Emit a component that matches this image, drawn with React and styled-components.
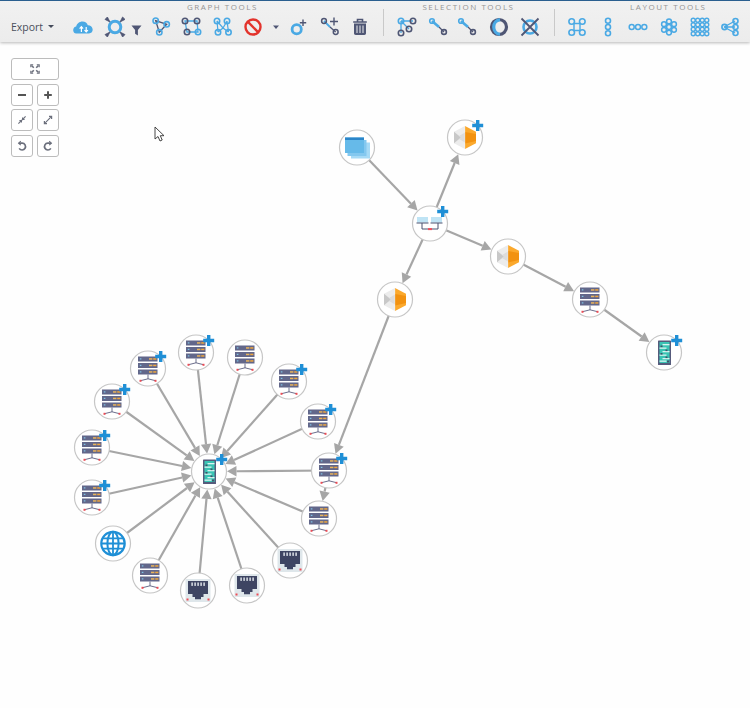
import React from 'react';
import styled, { createGlobalStyle } from 'styled-components';

const Global = createGlobalStyle`
  html, body { margin: 0; padding: 0; background: #fefefe; overflow: hidden; }
  #root { width: 750px; height: 708px; }
`;
const Page = styled.div`
  width: 750px; height: 708px; display: flex; flex-direction: column;
  font-family: "Open Sans", "Liberation Sans", sans-serif; background: #fefefe;
`;
const Toolbar = styled.header`
  flex: none; height: 41px; display: flex; align-items: stretch; box-sizing: content-box;
  border-top: 1.5px solid #2a5f8f;
  background: linear-gradient(#f1f1f1, #ececec);
  box-shadow: 0 1px 3px rgba(0,0,0,.28);
  position: relative; z-index: 2;
`;
const ExportMenu = styled.button`
  flex: none; width: 69px; padding: 10px 0 0 11px; border: 0; background: none; display: flex; align-items: center; gap: 5px;
  font: 400 10.5px "Open Sans", sans-serif; color: #4a4f5c; box-sizing: border-box;
`;
const Caret = styled.span`
  width: 0; height: 0; border-left: 3px solid transparent; border-right: 3px solid transparent;
  border-top: 3.5px solid #444a5a; margin-top: -1px;
`;
const Group = styled.section`
  flex: none; display: flex; flex-direction: column; align-items: stretch;
`;
const GroupLabel = styled.div`
  height: 11px; line-height: 11px; text-align: center; font-size: 8px; letter-spacing: 1.55px; color: #959595;
  white-space: nowrap; padding-left: ${p => p.$indent || 0}px;
`;
const Icons = styled.div`
  display: flex; height: 26px; margin-top: 2px;
`;
const Cell = styled.button`
  flex: none; width: ${p => p.$w || 30.6}px; height: 26px; padding: 0; border: 0; background: none;
  display: flex; align-items: center; justify-content: center;
`;
const ToolGlyph = styled.svg`
  flex: none; width: 30px; height: 26px; overflow: visible;
`;
const Divider = styled.div`
  flex: none; width: 1px; height: 27px; align-self: center; margin: 1px ${p => p.$r}px 0 ${p => p.$l}px; background: #c9c9c9;
`;
const Canvas = styled.main`
  flex: 1; position: relative;
`;
const Graph = styled.svg`
  display: block; width: 750px; height: 665.5px;
`;
const Controls = styled.nav`
  position: absolute; left: 11px; top: 16px; width: 48px; display: grid; grid-template-columns: 22px 22px; gap: 3.5px 4px;
`;
const Ctrl = styled.button`
  grid-column: ${p => p.$wide ? '1 / 3' : 'auto'}; height: 22px; padding: 0; box-sizing: border-box;
  border: 1px solid #bcbcbc; border-radius: 3px; background: #fff;
  display: flex; align-items: center; justify-content: center;
`;
const Pointer = styled.svg`
  position: absolute; left: 153.5px; top: 83.5px; width: 12px; height: 17px;
`;

const B = '#4aa9e4';
const D = '#4f5674';

const TI = ({ children }) => <ToolGlyph viewBox="-15 -13 30 26" fill="none">{children}</ToolGlyph>;
const C = ({ x, y, c = B, r = 2.7, w = 1.6 }) => <circle cx={x} cy={y} r={r} stroke={c} strokeWidth={w} fill="none" />;
const L = ({ p, c = D, w = 1.3 }) => <path d={p} stroke={c} strokeWidth={w} fill="none" />;

const toolIcons = {
  cloud: <TI><path d="M-7 6.5c-3 0-3.8-2-3.8-3.6 0-2 1.5-3.3 3-3.5C-7.3-3.2-4.6-5.5-1.5-5.5c2.7 0 4.8 1.5 5.3 3.8 2.3-.2 4.4 1.2 4.8 3.8C9 4.6 7.2 6.5 5 6.5Z" fill={B} /><path d="M-2.6 5V0M-4.4 1.6-2.6-.3-.9 1.6M2.2 0V5M.5 3.2 2.2 5 3.9 3.2" stroke="#fff" strokeWidth="1.2" /></TI>,
  focus: <TI><circle r="5.8" stroke={B} strokeWidth="3" /><path d="M-5-5-10-7.6-7.6-10ZM5-5 10-7.6 7.6-10ZM-5 5-10 7.6-7.6 10ZM5 5 10 7.6 7.6 10Z" fill={D} stroke={D} strokeWidth=".8" /></TI>,
  filter: <TI><path d="M-5-4.5H5L1.4 0V5.5L-1.4 3.8V0Z" fill={D} transform="translate(-2.5 3)" /></TI>,
  g1: <TI><L p="M-5.3-6.3 5.7-2.7-1.7 5.3Z" /><C x={-5.3} y={-6.3} /><C x={5.7} y={-2.7} /><C x={-1.7} y={5.3} /></TI>,
  g2: <TI><L p="M-6-6H6L7 5H-4Z" c={B} /><C x={-6} y={-6} c={D} /><C x={6} y={-6} c={D} /><C x={-4} y={5} c={D} /><C x={7} y={5} /></TI>,
  g3: <TI><L p="M-5-6-4 5M-5-6 1 1 6.5 5M5-6 1 1-4 5M5-6 6.5 5" w={1.2} c={B} /><C x={-5} y={-6} /><C x={5} y={-6} /><C x={-4} y={5.3} /><C x={6.5} y={5.3} /></TI>,
  ban: <TI><circle r="7.5" stroke="#e3332c" strokeWidth="2.4" /><path d="M-5-5.2 5 5.2" stroke="#e3332c" strokeWidth="2.4" /></TI>,
  drop: <TI><path d="M-3-1.5H3L0 2Z" fill={D} /></TI>,
  addNode: <TI><circle cx={-2.3} cy={2.3} r="4.6" stroke={B} strokeWidth="2.8" /><path d="M4-7.5V-1M.8-4.3H7.2" stroke={D} strokeWidth="1.4" /></TI>,
  addEdge: <TI><L p="M-5-6 1 0" c={B} w={1.8} /><L p="M1 0 6.7 5" /><C x={-5} y={-6} c={D} r={2.4} w={1.5} /><C x={6.7} y={5} c={D} r={2.4} w={1.5} /><path d="M5-9.5V-1.5M1-5.5H9" stroke={D} strokeWidth="1.4" /></TI>,
  trash: <TI><path d="M-6.8-5H6.8M-2.5-5V-7.5H2.5V-5" stroke={D} strokeWidth="1.6" /><path d="M-6-3.5H6V6.3C6 7.3 5.3 8 4.3 8H-4.3C-5.3 8-6 7.3-6 6.3Z" fill={D} /><path d="M-3-1.5V6M0-1.5V6M3-1.5V6" stroke="#eee" strokeWidth="1" /></TI>,
  s1: <TI><L p="M-6-6V6M-6-6H6M-6-6 2 2" c={B} /><C x={-6} y={-6} /><C x={6} y={-6} c={D} /><C x={-6} y={6} c={D} /><C x={2} y={2} c={D} /></TI>,
  s2: <TI><L p="M-6-6 1 0" c={B} w={2.6} /><L p="M1 0 6 5" /><C x={-6} y={-6} r={2.3} /><C x={6} y={5} c={D} r={2.4} /></TI>,
  s3: <TI><L p="M-7-6 0 0" c={B} w={2.6} /><L p="M0 0 5 5" /><C x={-7} y={-6} r={2.3} /><C x={5} y={5} c={D} r={2.4} /></TI>,
  s4: <TI><circle r="7.5" stroke={D} strokeWidth="3.2" /><path d="M1-7.4A7.5 7.5 0 0 0 1 7.4" stroke={B} strokeWidth="3.2" /></TI>,
  s5: <TI><circle r="6.5" stroke={B} strokeWidth="2.6" /><path d="M-8.5-8.5 8.5 8.5M8.5-8.5-8.5 8.5" stroke={D} strokeWidth="1.8" /></TI>,
  l1: <TI><path d="M-3-3.5H3V3.5H-3Z" stroke={B} strokeWidth="1.4" /><C x={-5.3} y={-5.5} r={2.8} /><C x={5.3} y={-5.5} r={2.8} /><C x={-5.3} y={5.5} r={2.8} /><C x={5.3} y={5.5} r={2.8} /></TI>,
  l2: <TI><C x={0} y={-6.3} r={2.5} /><C x={0} y={0} r={2.5} /><C x={0} y={6.3} r={2.5} /></TI>,
  l3: <TI><C x={-6.3} y={0} r={2.5} w={1.5} /><C x={0} y={0} r={2.5} w={1.5} /><C x={6.3} y={0} r={2.5} w={1.5} /></TI>,
  l4: <TI>{[[0,0],[0,-5.6],[0,5.6],[-5,-2.8],[5,-2.8],[-5,2.8],[5,2.8]].map(([x,y]) => <C key={x+'_'+y} x={x} y={y} r={2.4} w={1.5} />)}</TI>,
  l5: <TI>{[-6,-2,2,6].flatMap(x => [-6,-2,2,6].map(y => <C key={x+'_'+y} x={x*1.13} y={y*1.13} r={2} w={1.4} />))}</TI>,
  l6: <TI><L p="M-6 0 5-6M-6 0 5 0M-6 0 5 6" c={B} w={1.4} /><C x={-5.5} y={0} r={2.6} /><C x={5.5} y={-6} r={2.5} /><C x={5.5} y={0} r={2.5} /><C x={5.5} y={6} r={2.5} /></TI>,
};

const SI = ({ children }) => <svg width="14" height="14" viewBox="-7 -7 14 14" fill="none">{children}</svg>;
const G = '#6b6f7c';
const ctrlIcons = {
  fit: <SI><path d="M-1.2-1.2-3.5-3.5M1.2-1.2 3.5-3.5M-1.2 1.2-3.5 3.5M1.2 1.2 3.5 3.5" stroke={G} strokeWidth="1.6" /><path d="M-4.2-1.8V-4.2H-1.8M4.2-1.8V-4.2H1.8M-4.2 1.8V4.2H-1.8M4.2 1.8V4.2H1.8" stroke={G} strokeWidth="1.1" /></SI>,
  minus: <SI><path d="M-4 0H4" stroke="#555" strokeWidth="2" /></SI>,
  plus: <SI><path d="M-3.8 0H3.8M0-3.8V3.8" stroke="#555" strokeWidth="2" /></SI>,
  shrink: <SI><path d="M-3.6 3.6 3.6-3.6" stroke={G} strokeWidth="1.1" /><path d="M.6-2.6V-.6H2.6M-2.6.6H-.6V2.6" stroke={G} strokeWidth="1.2" /></SI>,
  grow: <SI><path d="M-2.8 2.8 2.8-2.8" stroke={G} strokeWidth="1.1" /><path d="M1-3.6H3.6V-1M-3.6 1V3.6H-1" stroke={G} strokeWidth="1.2" /></SI>,
  ccw: <SI><path d="M-3.2-2.8H.2A3.4 3.4 0 1 1-2.8 2.4" stroke={G} strokeWidth="1.7" /><path d="M-1.2-4.8-3.4-2.8-1.2-.8" stroke={G} strokeWidth="1.1" /></SI>,
  cw: <SI><path d="M3.2-2.8H-.2A3.4 3.4 0 1 0 2.8 2.4" stroke={G} strokeWidth="1.7" /><path d="M1.2-4.8 3.4-2.8 1.2-.8" stroke={G} strokeWidth="1.1" /></SI>,
};

const Server = () => (
  <g>
    <path d="M0 6V10.5M-7.5 12.2 0 10.3 7.5 12.2" stroke="#5b6080" strokeWidth=".9" fill="none" />
    <rect x="-8.5" y="11.3" width="2" height="2" fill="#ee4c55" />
    <rect x="6.5" y="11.3" width="2" height="2" fill="#ee4c55" />
    {[-12, -5.5, 1].map(y => (
      <g key={y}>
        <rect x="-10" y={y} width="19.5" height="5" fill="#62678a" />
        <rect x="-8.2" y={y + 1.8} width="1.6" height="1.2" fill="#7fc4e6" />
        <rect x="1" y={y + 1.7} width="3.4" height="1.5" fill="#e8b45c" />
        <rect x="5.2" y={y + 1.7} width="3.2" height="1.5" fill="#f0a63c" />
      </g>
    ))}
  </g>
);
const Rack = () => (
  <g transform="translate(.5 0)">
    <rect x="-6.5" y="-12" width="13" height="24.5" fill="#565b7c" rx=".6" />
    <rect x="-5" y="-10.5" width="10" height="21" fill="#39c4b4" />
    {[-8.5, -5, -1.5, 2, 5.5, 8].map((y, i) => (
      <rect key={y} x={i % 2 ? -5 : -2} y={y} width="7" height="1.3" fill="#d8f4f0" />
    ))}
    {[-7, -3, 0.5, 4].map((y, i) => (
      <rect key={y} x={i % 2 ? 1 : -4} y={y} width="2" height="1.6" fill="#3f5168" />
    ))}
    <rect x="2.5" y="8" width="2" height="2" fill="#3f5168" />
  </g>
);
const Hex = () => (
  <g>
    <path d="M0-11.5-11-5.7V5.7L0 11.5Z" fill="#ececec" />
    <path d="M-11-5.7-4 0-11 5.7Z" fill="#c8c8c8" />
    <path d="M0-5-6-1.5-4 0-6 1.5 0 5Z" fill="#dcdcdc" />
    <path d="M0-11.5 11-5.7V5.7L0 11.5Z" fill="#fba92d" />
    <path d="M0-5.5 11-3.5V3.5L0 6Z" fill="#f29210" />
    <path d="M0-12V12" stroke="#fff" strokeWidth=".5" strokeDasharray="1 1" />
  </g>
);
const Windows = () => (
  <g>
    <rect x="-6" y="-5" width="19" height="16" fill="#a6daf6" />
    <rect x="-9.5" y="-7.5" width="19" height="16" fill="#84c8ef" />
    <rect x="-12" y="-10" width="19" height="15.5" fill="#66bae9" />
    <rect x="-12" y="-10" width="19" height="2.5" fill="#2b86c9" />
  </g>
);
const Switch = () => (
  <g>
    <rect x="-13" y="-6.5" width="11" height="5.5" fill="#bfe4f5" />
    <rect x="1" y="-6.5" width="11" height="5.5" fill="#bfe4f5" />
    <path d="M-13.5-.5H-1.5M.5-.5H12.5" stroke="#4b5270" strokeWidth="1.2" />
    <path d="M-8-.5V5.5H8V-.5" stroke="#4b5270" strokeWidth="1" fill="none" />
    <rect x="-2" y="4.6" width="4" height="2" fill="#ef4e5c" />
  </g>
);
const Port = () => (
  <g>
    <rect x="-12.5" y="-11.5" width="25" height="23" fill="#dfe7eb" />
    <path d="M-10-9.5H10V3.5H5.5V6.5H3V8.8H-3V6.5H-5.5V3.5H-10Z" fill="#3e4563" />
    {[-6.6, -3.6, -.6, 2.4, 5.4].map(x => <rect key={x} x={x} y="-8" width="1.4" height="3.4" fill="#e8edf2" />)}
    <rect x="-11.5" y="8" width="2" height="2" fill="#ee4c55" />
    <rect x="9.5" y="8" width="2" height="2" fill="#ee4c55" />
  </g>
);
const Globe = () => (
  <g fill="none" stroke="#1f8fd6">
    <circle r="11.7" strokeWidth="2.2" />
    <ellipse rx="5.6" ry="11.7" strokeWidth="2" />
    <path d="M0-11.7V11.7M-11.7 0H11.7M-10-5.2H10M-10 5.2H10" strokeWidth="1.8" />
  </g>
);
const art = { server: Server, rack: Rack, hex: Hex, win: Windows, sw: Switch, port: Port, globe: Globe };

const nodes = {
  win: [357, 147, 'win'], hexTop: [465, 137, 'hex', 1], sw: [430, 223, 'sw', 1], hexR: [508, 256, 'hex'], hexL: [395, 299, 'hex'],
  srvR: [590, 299, 'server'], rackR: [664, 352, 'rack', 1],
  hub: [209, 471, 'rack', 1], a: [329, 470, 'server', 1], b: [319, 518, 'server'], c: [290, 560, 'port'], d: [247, 585, 'port'],
  e: [198, 590, 'port'], f: [150, 575, 'server'], g: [113, 543, 'globe'], h: [92, 497, 'server', 1], i: [92, 447, 'server', 1],
  j: [112, 401, 'server', 1], k: [148, 368, 'server', 1], l: [196, 352, 'server', 1], m: [245, 357, 'server'], n: [289, 381, 'server', 1], o: [318, 421, 'server', 1],
};
const edges = [
  ['win', 'sw'], ['sw', 'hexTop'], ['sw', 'hexR'], ['sw', 'hexL'], ['hexR', 'srvR'], ['srvR', 'rackR'], ['hexL', 'a'], ['a', 'b'],
  ...'abcdefghijklmno'.split('').map(k => [k, 'hub']),
];

const Edge = ({ from, to }) => {
  const [x1, y1] = nodes[from], [x2, y2] = nodes[to];
  const len = Math.hypot(x2 - x1, y2 - y1), ux = (x2 - x1) / len, uy = (y2 - y1) / len;
  const tx = x2 - ux * 18, ty = y2 - uy * 18, bx = tx - ux * 9.5, by = ty - uy * 9.5;
  return (
    <g>
      <path d={`M${x1} ${y1}L${bx} ${by}`} stroke="#a6a6a6" strokeWidth="2.2" />
      <path d={`M${tx} ${ty}L${bx - uy * 5.2} ${by + ux * 5.2}L${bx + uy * 5.2} ${by - ux * 5.2}Z`} fill="#a6a6a6" />
    </g>
  );
};
const Node = ({ x, y, kind, plus }) => {
  const Art = art[kind];
  return (
    <g transform={`translate(${x} ${y})`}>
      <circle r="17.5" fill="#fff" stroke="#c6c6c6" strokeWidth="1.2" />
      <Art />
      {plus ? <path d="M12.7-17.5V-6.5M7.2-12H18.2" stroke="#1f8fd6" strokeWidth="3.4" /> : null}
    </g>
  );
};

const Tools = ({ items }) => (
  <Icons>
    {items.map(([k, w]) => <Cell key={k} $w={w}>{toolIcons[k]}</Cell>)}
  </Icons>
);

export default function App() {
  return (
    <Page>
      <Global />
      <Toolbar>
        <ExportMenu>Export <Caret /></ExportMenu>
        <Group>
          <GroupLabel>GRAPH TOOLS</GroupLabel>
          <Tools items={[['cloud', 30], ['focus', 32], ['filter', 15], ['g1', 30], ['g2', 30], ['g3', 31], ['ban', 31], ['drop', 16], ['addNode', 30], ['addEdge', 30], ['trash', 32]]} />
        </Group>
        <Divider $l={7} $r={8} />
        <Group>
          <GroupLabel>SELECTION TOOLS</GroupLabel>
          <Tools items={[['s1'], ['s2'], ['s3'], ['s4'], ['s5']]} />
        </Group>
        <Divider $l={9} $r={7} />
        <Group>
          <GroupLabel $indent={29}>LAYOUT TOOLS</GroupLabel>
          <Tools items={[['l1'], ['l2'], ['l3'], ['l4'], ['l5'], ['l6']]} />
        </Group>
      </Toolbar>
      <Canvas>
        <Graph viewBox="0 41.5 750 665.5">
          {edges.map(([a, b]) => <Edge key={a + b} from={a} to={b} />)}
          {Object.entries(nodes).map(([k, [x, y, kind, plus]]) => <Node key={k} x={x} y={y} kind={kind} plus={plus} />)}
        </Graph>
        <Controls>
          <Ctrl $wide>{ctrlIcons.fit}</Ctrl>
          <Ctrl>{ctrlIcons.minus}</Ctrl>
          <Ctrl>{ctrlIcons.plus}</Ctrl>
          <Ctrl>{ctrlIcons.shrink}</Ctrl>
          <Ctrl>{ctrlIcons.grow}</Ctrl>
          <Ctrl>{ctrlIcons.ccw}</Ctrl>
          <Ctrl>{ctrlIcons.cw}</Ctrl>
        </Controls>
        <Pointer viewBox="0 0 12 17"><path d="M1 1V13L4 10.5 6 15 8.2 14 6.3 9.7H10Z" fill="#fff" stroke="#333" strokeWidth=".9" /></Pointer>
      </Canvas>
    </Page>
  );
}
